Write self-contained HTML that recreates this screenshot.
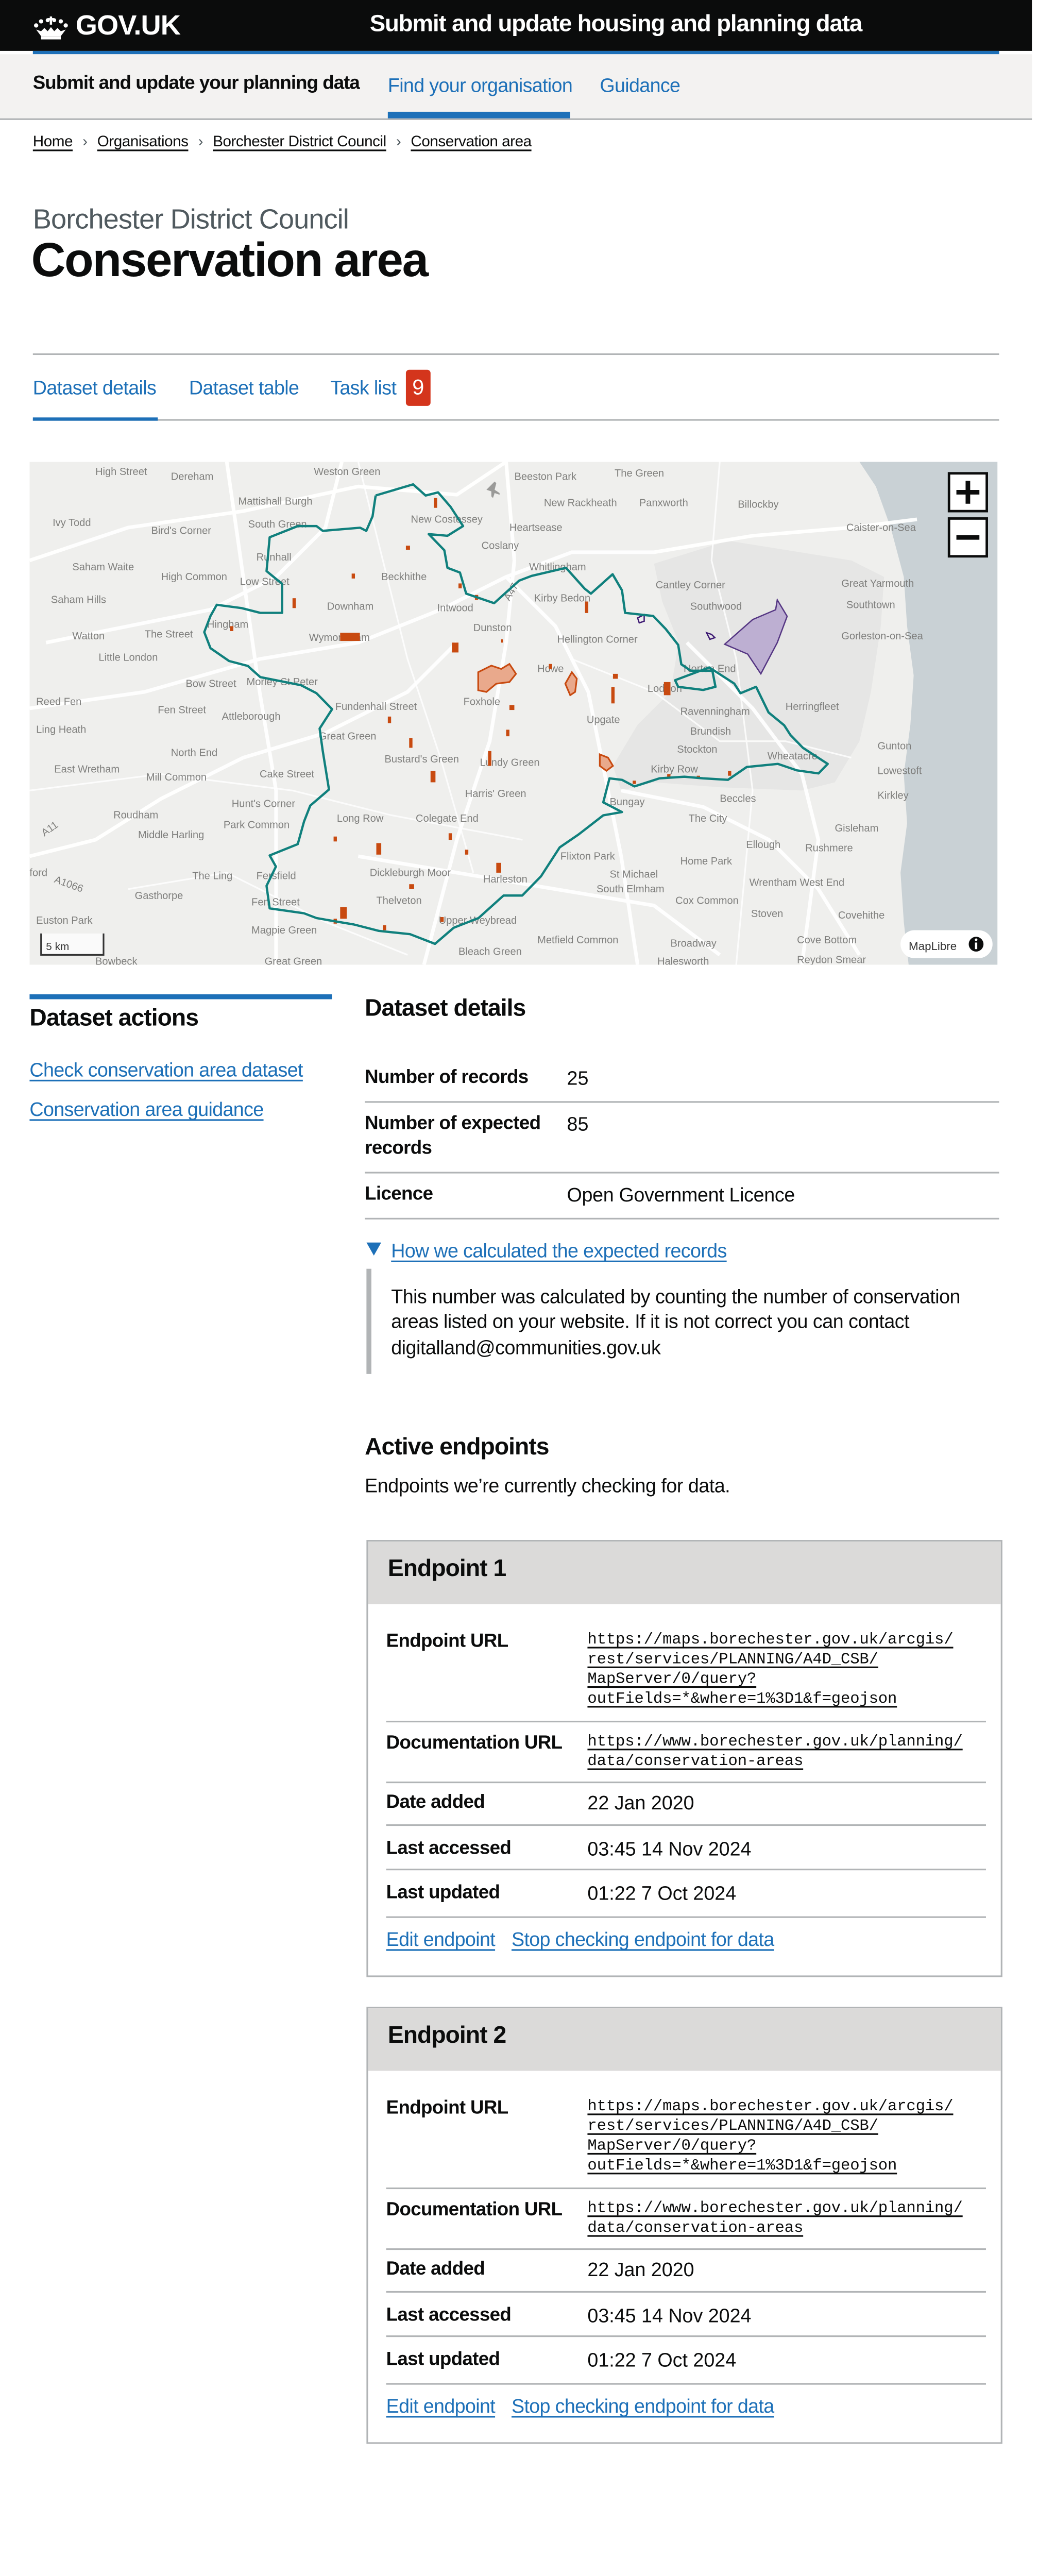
<!DOCTYPE html>
<html><head><meta charset="utf-8">
<style>
html,body{margin:0;padding:0;background:#fff;overflow:hidden;width:2048px;height:5112px}
#w{position:absolute;left:0;top:0;width:628px;height:1567px;transform:scale(3.19);transform-origin:0 0;overflow:hidden;font-family:"Liberation Sans",Arial,sans-serif;color:#0b0c0c}
.a{position:absolute}
a{color:#1d70b8;text-decoration:underline;text-underline-offset:2px;text-decoration-thickness:0.6px}
.blk{color:#0b0c0c}
.hdr{left:0;top:0;width:628px;height:30.5px;background:#0b0c0c}
.sub{left:0;top:32.5px;width:628px;height:39px;background:#f3f2f1;border-bottom:1px solid #b1b4b6}
.b{font-weight:bold}
.t12{font-size:11.8px}
.card{position:absolute;left:222.5px;width:387px;border:1px solid #b1b4b6;box-sizing:border-box;overflow:hidden}
.card .h{background:#dbdad9;height:38px;position:relative}
.card .h span{position:absolute;left:12.5px;top:9px;font-size:14.5px;font-weight:bold;letter-spacing:-0.3px}
.line{position:absolute;left:11.5px;width:365px;height:1px;background:#b1b4b6}
.lab{position:absolute;left:11.5px;font-weight:bold;font-size:11.5px;letter-spacing:-0.2px;margin-top:1px}
.val{position:absolute;left:134px;font-size:11.8px}
.val.mono{font-family:"Liberation Mono",monospace;font-size:9.6px;line-height:12px;color:#0b0c0c;letter-spacing:-0.05px;white-space:nowrap}
.mono a{color:#0b0c0c}
</style></head><body><div id="w">

<div class="a hdr"></div>
<svg class="a" style="left:20px;top:10px" width="22" height="14" viewBox="0 0 22 14"><g fill="#fff"><circle cx="2" cy="5.5" r="1.3"/><circle cx="5" cy="3" r="1.3"/><circle cx="9" cy="2.3" r="1.2"/><circle cx="13" cy="2.3" r="1.2"/><circle cx="17" cy="3" r="1.3"/><circle cx="20" cy="5.5" r="1.3"/><rect x="10.3" y="0" width="1.4" height="5"/><rect x="9" y="1" width="4" height="1.2"/><path d="M2 8 L5 12 H17 L20 8 L17 9 L15 7 L13 9 L11 6.5 L9 9 L7 7 L5 9Z"/><rect x="5" y="12" width="12" height="2"/></g></svg>
<div class="a b" style="left:46px;top:6px;color:#fff;font-size:17px;letter-spacing:-0.3px">GOV.UK</div>
<div class="a b" style="left:225px;top:6.5px;color:#fff;font-size:14.3px;letter-spacing:-0.35px">Submit and update housing and planning data</div>
<div class="a" style="left:19.6px;top:30.5px;width:588.8px;height:2px;background:#1d70b8"></div>

<div class="a sub"></div>
<div class="a b" style="left:20px;top:45px;font-size:11.5px;letter-spacing:-0.3px">Submit and update your planning data</div>
<div class="a" style="left:236px;top:45px;font-size:11.8px;color:#1d70b8;letter-spacing:-0.2px">Find your organisation</div>
<div class="a" style="left:365px;top:45px;font-size:11.8px;color:#1d70b8;letter-spacing:-0.2px">Guidance</div>
<div class="a" style="left:236px;top:68px;width:111px;height:3.5px;background:#1d70b8"></div>

<div class="a" style="left:20px;top:81px;font-size:9.3px;letter-spacing:-0.15px;white-space:nowrap">
<a class="blk" href="#">Home</a><span style="color:#505a5f;margin:0 6px">›</span><a class="blk" href="#">Organisations</a><span style="color:#505a5f;margin:0 6px">›</span><a class="blk" href="#">Borchester District Council</a><span style="color:#505a5f;margin:0 6px">›</span><a class="blk" href="#">Conservation area</a></div>

<div class="a" style="left:20px;top:123.5px;font-size:17px;color:#505a5f;letter-spacing:-0.3px">Borchester District Council</div>
<div class="a b" style="left:19px;top:143px;font-size:29px;letter-spacing:-0.7px">Conservation area</div>

<div class="a" style="left:20px;top:215px;width:588px;height:1px;background:#b1b4b6"></div>
<div class="a" style="left:20px;top:229px;font-size:11.8px;color:#1d70b8;letter-spacing:-0.2px">Dataset details</div>
<div class="a" style="left:115px;top:229px;font-size:11.8px;color:#1d70b8;letter-spacing:-0.2px">Dataset table</div>
<div class="a" style="left:201px;top:229px;font-size:11.8px;color:#1d70b8;letter-spacing:-0.2px">Task list</div>
<div class="a" style="left:247px;top:225px;width:15px;height:22px;background:#d4351c;border-radius:2px;color:#fff;font-size:13px;text-align:center;line-height:22px">9</div>
<div class="a" style="left:20px;top:255px;width:588px;height:1px;background:#b1b4b6"></div>
<div class="a" style="left:20px;top:253.5px;width:76px;height:2.5px;background:#1d70b8"></div>

<!-- MAP -->
<svg class="a" style="left:18.4px;top:280.6px" width="589" height="306.5" viewBox="0 0 589 306.5">
<rect width="589" height="306.5" fill="#efefed"/>
<path d="M505 0 H589 V306.5 H535 L532 280 L530 250 L534 220 L532 190 L536 160 L538 130 L534 100 L532 70 L524 40 L515 15Z" fill="#c9d1d5"/>
<path d="M380 62 L425 48 L500 60 L520 70 L518 100 L512 140 L505 170 L490 195 L470 200 L420 198 L380 195 L360 200 L355 185 L370 160 L390 140 L395 110 L385 85Z" fill="#e3e4e2" opacity=".8"/>
<g fill="none" stroke="#fff" stroke-width="2.2" opacity=".95">
<path d="M0 60 L60 40 L130 30 L200 15 L260 20 L290 0"/>
<path d="M0 150 L70 140 L140 120 L200 110 L250 90 L290 70 L330 55 L380 55 L440 45 L500 40 L540 35"/>
<path d="M290 0 L295 60 L290 110 L280 170 L260 230 L240 306"/>
<path d="M0 240 L40 230 L80 205 L130 180 L180 165 L230 140 L260 110"/>
<path d="M290 70 L320 100 L340 140 L350 190 L360 240 L370 306"/>
<path d="M120 0 L130 70 L140 140 L150 200 L150 306"/>
<path d="M360 200 L410 210 L450 230 L480 260 L505 300"/>
<path d="M400 110 L440 150 L470 190 L480 230 L470 306"/>
<path d="M200 240 L260 250 L320 260 L380 270 L420 300"/>
<path d="M10 110 L60 100 L110 90 L150 70 L180 40 L190 0"/>
</g>
<g fill="none" stroke="#fff" stroke-width="1" opacity=".8">
<path d="M0 200 L80 190 L160 200 L220 215 L300 230"/>
<path d="M200 0 L215 60 L230 120 L250 180 L270 250"/>
<path d="M420 0 L415 60 L430 120 L440 200 L430 306"/>
<path d="M60 260 L120 250 L180 280 L230 300"/>
<path d="M330 120 L380 140 L420 170 L460 170 L500 180"/>
</g>
<g fill="#7a7a78" font-family="Liberation Sans,sans-serif" font-size="6.3" opacity=".95">
<text x="40" y="8">High Street</text><text x="86" y="11">Dereham</text><text x="173" y="8">Weston Green</text><text x="295" y="11">Beeston Park</text><text x="356" y="9">The Green</text>
<text x="127" y="26">Mattishall Burgh</text><text x="313" y="27">New Rackheath</text><text x="371" y="27">Panxworth</text><text x="431" y="28">Billockby</text>
<text x="14" y="39">Ivy Todd</text><text x="74" y="44">Bird's Corner</text><text x="133" y="40">South Green</text><text x="232" y="37">New Costessey</text><text x="292" y="42">Heartsease</text><text x="497" y="42">Caister-on-Sea</text>
<text x="275" y="53">Coslany</text><text x="138" y="60">Runhall</text><text x="26" y="66">Saham Waite</text><text x="80" y="72">High Common</text><text x="128" y="75">Low Street</text><text x="214" y="72">Beckhithe</text><text x="304" y="66">Whitlingham</text><text x="381" y="77">Cantley Corner</text><text x="494" y="76">Great Yarmouth</text>
<text x="13" y="86">Saham Hills</text><text x="181" y="90">Downham</text><text x="248" y="91">Intwood</text><text x="307" y="85">Kirby Bedon</text><text x="402" y="90">Southwood</text><text x="497" y="89">Southtown</text>
<text x="108" y="101">Hingham</text><text x="26" y="108">Watton</text><text x="70" y="107">The Street</text><text x="170" y="109">Wymondham</text><text x="270" y="103">Dunston</text><text x="321" y="110">Hellington Corner</text><text x="494" y="108">Gorleston-on-Sea</text>
<text x="42" y="121">Little London</text><text x="309" y="128">Howe</text><text x="95" y="137">Bow Street</text><text x="132" y="136">Morley St Peter</text><text x="376" y="140">Loddon</text><text x="398" y="128">Norton End</text>
<text x="4" y="148">Reed Fen</text><text x="78" y="153">Fen Street</text><text x="186" y="151">Fundenhall Street</text><text x="264" y="148">Foxhole</text><text x="396" y="154">Ravenningham</text><text x="460" y="151">Herringfleet</text>
<text x="117" y="157">Attleborough</text><text x="339" y="159">Upgate</text><text x="4" y="165">Ling Heath</text><text x="402" y="166">Brundish</text><text x="176" y="169">Great Green</text><text x="516" y="175">Gunton</text><text x="394" y="177">Stockton</text>
<text x="86" y="179">North End</text><text x="216" y="183">Bustard's Green</text><text x="274" y="185">Lundy Green</text><text x="449" y="181">Wheatacre</text><text x="15" y="189">East Wretham</text><text x="378" y="189">Kirby Row</text><text x="516" y="190">Lowestoft</text>
<text x="71" y="194">Mill Common</text><text x="140" y="192">Cake Street</text><text x="265" y="204">Harris' Green</text><text x="516" y="205">Kirkley</text><text x="353" y="209">Bungay</text><text x="420" y="207">Beccles</text>
<text x="123" y="210">Hunt's Corner</text><text x="51" y="217">Roudham</text><text x="187" y="219">Long Row</text><text x="235" y="219">Colegate End</text><text x="401" y="219">The City</text><text x="118" y="223">Park Common</text><text x="490" y="225">Gisleham</text>
<text x="66" y="229">Middle Harling</text><text x="436" y="235">Ellough</text><text x="472" y="237">Rushmere</text><text x="323" y="242">Flixton Park</text><text x="396" y="245">Home Park</text><text x="353" y="253">St Michael</text>
<text x="99" y="254">The Ling</text><text x="138" y="254">Fersfield</text><text x="207" y="252">Dickleburgh Moor</text><text x="276" y="256">Harleston</text><text x="438" y="258">Wrentham West End</text><text x="345" y="262">South Elmham</text>
<text x="64" y="266">Gasthorpe</text><text x="393" y="269">Cox Common</text><text x="135" y="270">Fen Street</text><text x="211" y="269">Thelveton</text><text x="439" y="277">Stoven</text><text x="492" y="278">Covehithe</text>
<text x="4" y="281">Euston Park</text><text x="249" y="281">Upper Weybread</text><text x="135" y="287">Magpie Green</text><text x="309" y="293">Metfield Common</text><text x="390" y="295">Broadway</text><text x="467" y="293">Cove Bottom</text>
<text x="261" y="300">Bleach Green</text><text x="382" y="306">Halesworth</text><text x="467" y="305">Reydon Smear</text><text x="143" y="306">Great Green</text><text x="40" y="306">Bowbeck</text>
<text x="0" y="252">ford</text><text x="16" y="256" transform="rotate(20 16 252)">A1066</text><text x="9" y="228" transform="rotate(-35 9 228)">A11</text><text x="292" y="85" transform="rotate(-60 292 85)">A47</text>
</g>
<path d="M280 15 l3 -3 l1 1 l-1 4 l3 2 l0 1 l-3 -1 l-1 3 l-1 -1 l0 -3 l-3 -1z" fill="#9a9a98"/>
<g fill="#c84a10">
<rect x="246" y="22" width="2" height="6"/><rect x="229" y="51" width="2.5" height="2.5"/><rect x="196" y="68" width="2" height="3"/><rect x="261" y="74" width="2" height="3"/><rect x="160" y="83" width="2" height="6"/><rect x="271" y="81" width="2" height="3"/>
<rect x="122" y="100" width="2" height="3"/><rect x="189" y="104" width="12" height="5"/><rect x="257" y="110" width="4" height="6"/><rect x="287" y="108" width="1" height="2"/><rect x="338" y="85" width="2" height="7"/>
<path d="M273 128 l8 -4 l6 2 l5 -3 l4 6 l-4 5 l-8 1 l-6 5 l-5 -1z" fill="#e9a98c" stroke="#c84a10" stroke-width="1"/>
<rect x="316" y="123" width="2" height="3"/><path d="M326 135 l4 -7 l3 4 l-1 8 l-3 2z" fill="#e9a98c" stroke="#c84a10"/><rect x="355" y="129" width="3" height="3"/><rect x="354" y="137" width="2" height="10"/>
<rect x="386" y="134" width="4" height="8"/><rect x="292" y="148" width="3" height="3"/><rect x="218" y="155" width="2" height="4"/><rect x="290" y="163" width="2" height="4"/><rect x="231" y="168" width="2" height="6"/>
<rect x="279" y="176" width="2" height="9"/><path d="M347 178 l5 2 l3 5 l-4 3 l-4 -3z" fill="#e9a98c" stroke="#c84a10"/><rect x="244" y="188" width="3" height="7"/><rect x="367" y="194" width="2" height="2"/><rect x="388" y="190" width="2" height="2"/><rect x="425" y="188" width="2" height="3"/><rect x="406" y="191" width="2" height="2"/>
<rect x="185" y="228" width="2" height="3"/><rect x="211" y="232" width="3" height="7"/><rect x="255" y="226" width="2" height="4"/><rect x="265" y="236" width="2" height="3"/><rect x="284" y="244" width="3" height="6"/><rect x="231" y="257" width="3" height="3"/><rect x="189" y="271" width="4" height="7"/><rect x="250" y="277" width="2" height="3"/><rect x="215" y="282" width="2" height="3"/><rect x="185" y="278" width="2" height="3"/>
</g>
<path d="M455 84 L461 94 L455 110 L445 129 L437 117 L423 111 L440 96 L454 90Z" fill="#b7a6cf" stroke="#3c1872" stroke-width="0.8" opacity=".85"/>
<path d="M370 95 l4 -2 l0 4 l-3 1z M412 104 l3 1 l2 2 l-3 1z" fill="none" stroke="#3c1872" stroke-width="0.8"/>
<polyline fill="none" stroke="#10807d" stroke-width="1.4" stroke-linejoin="round" points="210.6,20.5 233.4,13.7 241,20.5 248.6,18.6 256.2,27.4 263.8,39.1 254.3,45 242.9,44 252.4,53.8 254.3,64.5 261.9,67.4 265.7,80.2 282.7,86 297.9,72.3 305.5,69.4 326.4,64.5 337.8,77.2 341.6,80.2 354.8,68.4 360.5,78.2 362.4,91.9 379.5,93.8 387.1,101.7 394.7,111.4 396.6,123.2 402.3,127.1 415.5,127.1 417.4,136.9 409.9,138.8 394.7,136.9 392.8,132.9 413.6,125.1 428.8,134.9 432.6,140.8 442.1,136.9 445.9,144.7 449.7,152.5 459.2,160.3 463,166.2 470.6,174 485.7,183.8 480.1,189.6 466.8,187.7 455.4,183.8 436.4,185.7 425,193.5 409.9,192.6 398.5,191.6 383.3,192.6 368.1,197.5 360.5,193.5 352.9,192.6 349.1,207.2 360.5,213.1 349.1,215.1 334,226.8 322.6,234.6 311.2,252.2 299.8,263.9 288.4,263.9 273.2,277.6 258.1,283.5 246.7,293.3 231.5,287.4 212.5,285.4 197.3,281.5 186,279.6 174.6,277.6 167,274.7 146.1,271.7 144.2,258 149.9,246.3 146.1,239.5 163.2,232.6 167,218.9 170.8,209.2 182.2,199.4 178.4,175.9 176.5,162.3 184.1,150.5 174.6,140.8 165.1,135.9 140.4,131 132.8,124.2 121.4,121.2 110.1,113.4 106.3,103.6 110.1,93.8 113.9,87 129,89 140.4,91.9 153.7,91.9 153.7,74.3 144.2,66.5 146.1,45.9 163.2,39.1 174.6,39.1 178.4,42 201.1,40.1 204.9,42 208.7,33.2 210.6,20.5"/>
<rect x="559.5" y="7" width="23" height="23" fill="#fff" stroke="#0b0c0c" stroke-width="1.5"/>
<path d="M571 11.5 V25.5 M564 18.5 H578" stroke="#0b0c0c" stroke-width="2.8"/>
<rect x="559.5" y="34.5" width="23" height="23" fill="#fff" stroke="#0b0c0c" stroke-width="1.5"/>
<path d="M564 46 H578" stroke="#0b0c0c" stroke-width="2.8"/>
<rect x="7" y="287" width="38" height="13" fill="#fff" opacity=".7"/>
<path d="M7 287 V300 H45 V287" fill="none" stroke="#333" stroke-width="1"/>
<text x="10" y="297" font-family="Liberation Sans,sans-serif" font-size="6.5" fill="#333">5 km</text>
<rect x="530" y="285" width="56" height="17" rx="8.5" fill="#fff"/>
<text x="535" y="297" font-family="Liberation Sans,sans-serif" font-size="7" fill="#333">MapLibre</text>
<circle cx="576" cy="293.5" r="4.5" fill="#0b0c0c"/><rect x="575.3" y="292.5" width="1.4" height="4" fill="#fff"/><circle cx="576" cy="290.8" r="0.8" fill="#fff"/>
</svg>

<!-- Left column -->
<div class="a" style="left:18px;top:604.5px;width:184px;height:3.5px;background:#1d70b8"></div>
<div class="a b" style="left:18px;top:612px;font-size:14.5px;letter-spacing:-0.3px">Dataset actions</div>
<div class="a t12" style="left:18px;top:644px;letter-spacing:-0.2px"><a href="#">Check conservation area dataset</a></div>
<div class="a t12" style="left:18px;top:668px;letter-spacing:-0.2px"><a href="#">Conservation area guidance</a></div>

<!-- Right column -->
<div class="a b" style="left:222px;top:606px;font-size:14.5px;letter-spacing:-0.3px">Dataset details</div>
<div class="a b" style="left:222px;top:650px;font-size:11.5px;letter-spacing:-0.2px">Number of records</div>
<div class="a t12" style="left:345px;top:649px">25</div>
<div class="a" style="left:222px;top:670px;width:386px;height:1px;background:#b1b4b6"></div>
<div class="a b" style="left:222px;top:677px;font-size:11.5px;line-height:15px;width:115px;letter-spacing:-0.2px">Number of expected records</div>
<div class="a t12" style="left:345px;top:677px">85</div>
<div class="a" style="left:222px;top:713px;width:386px;height:1px;background:#b1b4b6"></div>
<div class="a b" style="left:222px;top:721px;font-size:11.5px;letter-spacing:-0.2px">Licence</div>
<div class="a t12" style="left:345px;top:720px;letter-spacing:-0.1px">Open Government Licence</div>
<div class="a" style="left:222px;top:741px;width:386px;height:1px;background:#b1b4b6"></div>

<svg class="a" style="left:222.5px;top:756px" width="9" height="9" viewBox="0 0 9 9"><path d="M0 0 H9 L4.5 8Z" fill="#1d70b8"/></svg>
<div class="a t12" style="left:238px;top:754px;letter-spacing:-0.2px"><a href="#">How we calculated the expected records</a></div>
<div class="a" style="left:222.5px;top:772px;width:3.5px;height:64px;background:#b1b4b6"></div>
<div class="a t12" style="left:238px;top:782px;width:360px;line-height:15.3px;letter-spacing:-0.15px">This number was calculated by counting the number of conservation areas listed on your website. If it is not correct you can contact digitalland@communities.gov.uk</div>

<div class="a b" style="left:222px;top:873px;font-size:14.5px;letter-spacing:-0.3px">Active endpoints</div>
<div class="a t12" style="left:222px;top:897px;letter-spacing:-0.15px">Endpoints we’re currently checking for data.</div>

<!-- Endpoint 1 -->
<div class="card" style="top:937px;height:266px">
<div class="h"><span>Endpoint 1</span></div>
<div class="lab" style="top:54px">Endpoint URL</div>
<div class="val mono" style="top:54px"><a href="#">https://maps.borechester.gov.uk/arcgis/<br>rest/services/PLANNING/A4D_CSB/<br>MapServer/0/query?<br>outFields=*&amp;where=1%3D1&amp;f=geojson</a></div>
<div class="line" style="top:109px"></div>
<div class="lab" style="top:116px">Documentation URL</div>
<div class="val mono" style="top:116px"><a href="#">https://www.borechester.gov.uk/planning/<br>data/conservation-areas</a></div>
<div class="line" style="top:146px"></div>
<div class="lab" style="top:152px">Date added</div><div class="val" style="top:152px">22 Jan 2020</div>
<div class="line" style="top:172px"></div>
<div class="lab" style="top:180px">Last accessed</div><div class="val" style="top:180px">03:45 14 Nov 2024</div>
<div class="line" style="top:199px"></div>
<div class="lab" style="top:207px">Last updated</div><div class="val" style="top:207px">01:22 7 Oct 2024</div>
<div class="line" style="top:228px"></div>
<div class="a t12" style="left:11.5px;top:235px;letter-spacing:-0.2px;white-space:nowrap"><a href="#">Edit endpoint</a><span style="display:inline-block;width:10px"></span><a href="#">Stop checking endpoint for data</a></div>
</div>

<!-- Endpoint 2 -->
<div class="card" style="top:1221px;height:266px">
<div class="h"><span>Endpoint 2</span></div>
<div class="lab" style="top:54px">Endpoint URL</div>
<div class="val mono" style="top:54px"><a href="#">https://maps.borechester.gov.uk/arcgis/<br>rest/services/PLANNING/A4D_CSB/<br>MapServer/0/query?<br>outFields=*&amp;where=1%3D1&amp;f=geojson</a></div>
<div class="line" style="top:109px"></div>
<div class="lab" style="top:116px">Documentation URL</div>
<div class="val mono" style="top:116px"><a href="#">https://www.borechester.gov.uk/planning/<br>data/conservation-areas</a></div>
<div class="line" style="top:146px"></div>
<div class="lab" style="top:152px">Date added</div><div class="val" style="top:152px">22 Jan 2020</div>
<div class="line" style="top:172px"></div>
<div class="lab" style="top:180px">Last accessed</div><div class="val" style="top:180px">03:45 14 Nov 2024</div>
<div class="line" style="top:199px"></div>
<div class="lab" style="top:207px">Last updated</div><div class="val" style="top:207px">01:22 7 Oct 2024</div>
<div class="line" style="top:228px"></div>
<div class="a t12" style="left:11.5px;top:235px;letter-spacing:-0.2px;white-space:nowrap"><a href="#">Edit endpoint</a><span style="display:inline-block;width:10px"></span><a href="#">Stop checking endpoint for data</a></div>
</div>

</div></body></html>
